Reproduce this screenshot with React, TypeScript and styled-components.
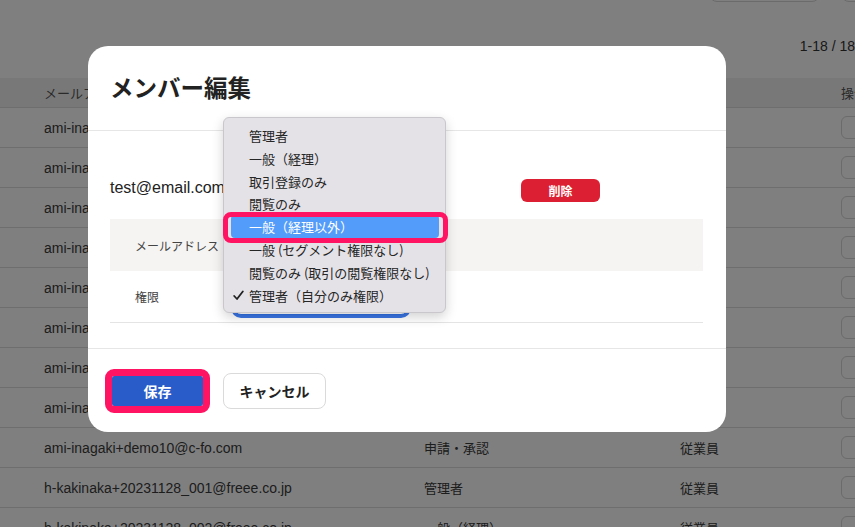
import React from "react";
import styled, { createGlobalStyle } from "styled-components";

const GlobalStyle = createGlobalStyle`
  html, body { margin: 0; padding: 0; }
  body {
    font-family: "Liberation Sans", "Noto Sans CJK JP", sans-serif;
    background: #fff;
  }
  * { box-sizing: border-box; }
`;

const Viewport = styled.div`
  position: relative;
  width: 855px;
  height: 527px;
  overflow: hidden;
  background: #fff;
`;

const PageContent = styled.div`
  width: 900px;
`;

const Toolbar = styled.div`
  display: flex;
  justify-content: flex-end;
  gap: 21px;
  margin-top: -30px;
  height: 32px;
`;

const ToolButton = styled.div<{ $w: number }>`
  width: ${(p) => p.$w}px;
  height: 32px;
  border: 1px solid #d6d6d6;
  border-radius: 8px;
  background: #fff;
`;

const PagerRow = styled.div`
  height: 76px;
  padding-top: 34px;
  padding-right: 45px;
  display: flex;
  justify-content: flex-end;
  font-size: 14px;
  line-height: 20px;
  color: #333;
`;

const GridRow = styled.div<{ $head?: boolean }>`
  display: grid;
  grid-template-columns: 380px 256px 161px 1fr;
  align-items: center;
  padding-left: 44px;
  height: ${(p) => (p.$head ? 30 : 40)}px;
  background: ${(p) => (p.$head ? "#f1f1f1" : "#fff")};
  border-bottom: 1px solid #dcdcdc;
  font-size: ${(p) => (p.$head ? 13 : 14)}px;
  color: ${(p) => (p.$head ? "#555" : "#3a3a3a")};
`;

const Cell = styled.div`
  white-space: nowrap;
  overflow: hidden;
`;

const CjkCell = styled(Cell)`
  font-size: 13px;
`;

const RowButton = styled.div`
  width: 52px;
  height: 23px;
  border: 1px solid #d6d6d6;
  border-radius: 6px;
  background: #fff;
`;

const Overlay = styled.div`
  position: absolute;
  inset: 0;
  background: rgba(0, 0, 0, 0.5);
`;

const Modal = styled.div`
  position: absolute;
  left: 88px;
  top: 46px;
  width: 638px;
  height: 386px;
  background: #fff;
  border-radius: 20px;
  display: flex;
  flex-direction: column;
`;

const ModalHeader = styled.div`
  height: 85px;
  border-bottom: 1px solid #e6e6e6;
  padding-left: 22px;
  display: flex;
  align-items: center;
`;

const Title = styled.h1`
  margin: 0;
  margin-top: -2px;
  font-family: "Noto Sans CJK JP", sans-serif;
  font-size: 23.5px;
  font-weight: 700;
  color: #222;
`;

const ModalBody = styled.div`
  position: relative;
  height: 217px;
  padding: 45px 23px 25px 22px;
`;

const EmailRow = styled.div`
  display: flex;
  align-items: flex-start;
  height: 24px;
`;

const EmailText = styled.div`
  width: 411px;
  font-size: 16px;
  line-height: 24px;
  color: #222;
`;

const DeleteButton = styled.button`
  margin-top: 3px;
  width: 79px;
  height: 23px;
  border: none;
  border-radius: 6px;
  background: #dc1f32;
  color: #fff;
  font-family: "Noto Sans CJK JP", sans-serif;
  font-size: 12px;
  font-weight: 700;
  padding: 0;
`;

const FormTable = styled.div`
  margin-top: 19px;
  display: flex;
  flex-direction: column;
`;

const FormRow = styled.div<{ $shaded?: boolean; $last?: boolean }>`
  display: flex;
  align-items: center;
  height: 52px;
  background: ${(p) => (p.$shaded ? "#f5f4f2" : "#fff")};
  border-bottom: ${(p) => (p.$last ? "1px solid #e4e4e4" : "none")};
`;

const FormLabel = styled.div`
  width: 124px;
  padding-left: 25px;
  font-size: 12px;
  color: #444;
  white-space: nowrap;
`;

const SelectBox = styled.div`
  width: 174px;
  height: 34px;
  margin-top: 2px;
  border: 1px solid #2f6fe0;
  border-radius: 7px;
  box-shadow: 0 0 0 3px #3a74e4;
  background: #fff;
`;

const Menu = styled.div`
  position: absolute;
  left: 135px;
  top: -14px;
  width: 223px;
  height: 196px;
  padding: 6px 0;
  background: #e4e2e6;
  border: 1px solid #c9c7cb;
  border-radius: 6px;
  box-shadow: 0 4px 12px rgba(0, 0, 0, 0.18);
  font-family: "Noto Sans CJK JP", sans-serif;
`;

const MenuItem = styled.div<{ $active?: boolean }>`
  position: relative;
  height: 22.85px;
  margin: 0 6px 0 7px;
  padding-left: 18px;
  border-radius: 4px;
  display: flex;
  align-items: center;
  font-size: 13px;
  color: ${(p) => (p.$active ? "#fff" : "#262626")};
  background: ${(p) => (p.$active ? "#539cf9" : "transparent")};
`;

const Check = styled.svg`
  position: absolute;
  left: 2px;
  top: 6px;
`;

const Highlight = styled.div`
  position: absolute;
  left: 135px;
  top: 81px;
  width: 225px;
  height: 31px;
  border: 5px solid #ff1463;
  border-radius: 8px;
`;

const ModalFooter = styled.div`
  flex: 1;
  border-top: 1px solid #e6e6e6;
  display: flex;
  align-items: center;
  gap: 20px;
  padding-left: 24px;
`;

const SaveButton = styled.button`
  width: 91px;
  height: 30px;
  border: none;
  border-radius: 2px;
  background: #2a5cc9;
  color: #fff;
  font-family: "Noto Sans CJK JP", sans-serif;
  font-size: 14px;
  font-weight: 700;
  outline: 7px solid #ff1463;
  padding: 0;
`;

const CancelButton = styled.button`
  width: 103px;
  height: 36px;
  border: 1px solid #dadada;
  border-radius: 8px;
  background: #fff;
  color: #222;
  font-family: "Noto Sans CJK JP", sans-serif;
  font-size: 14px;
  font-weight: 700;
  padding: 0;
`;

const rows: [string, string, string][] = [
  ["ami-inagaki+demo1@c-fo.com", "管理者", "従業員"],
  ["ami-inagaki+demo2@c-fo.com", "一般（経理）", "従業員"],
  ["ami-inagaki+demo3@c-fo.com", "取引登録のみ", "従業員"],
  ["ami-inagaki+demo4@c-fo.com", "閲覧のみ", "従業員"],
  ["ami-inagaki+demo5@c-fo.com", "一般（経理以外）", "従業員"],
  ["ami-inagaki+demo6@c-fo.com", "申請・承認", "従業員"],
  ["ami-inagaki+demo7@c-fo.com", "管理者", "従業員"],
  ["ami-inagaki+demo8@c-fo.com", "申請・承認", "従業員"],
  ["ami-inagaki+demo10@c-fo.com", "申請・承認", "従業員"],
  ["h-kakinaka+20231128_001@freee.co.jp", "管理者", "従業員"],
  ["h-kakinaka+20231128_002@freee.co.jp", "一般（経理）", "従業員"],
];

const menuItems = [
  "管理者",
  "一般（経理）",
  "取引登録のみ",
  "閲覧のみ",
  "一般（経理以外）",
  "一般 (セグメント権限なし)",
  "閲覧のみ (取引の閲覧権限なし)",
  "管理者（自分のみ権限）",
];

export default function App() {
  return (
    <>
      <GlobalStyle />
      <Viewport>
        <PageContent>
          <Toolbar>
            <ToolButton $w={111} />
            <ToolButton $w={59} />
          </Toolbar>
          <PagerRow>1-18 / 18</PagerRow>
          <GridRow $head>
            <Cell>メールアドレス</Cell>
            <Cell>権限</Cell>
            <Cell>役割</Cell>
            <Cell>操作</Cell>
          </GridRow>
          {rows.map(([email, perm, role]) => (
            <GridRow key={email}>
              <Cell>{email}</Cell>
              <CjkCell>{perm}</CjkCell>
              <CjkCell>{role}</CjkCell>
              <RowButton />
            </GridRow>
          ))}
        </PageContent>
        <Overlay>
          <Modal>
            <ModalHeader>
              <Title>メンバー編集</Title>
            </ModalHeader>
            <ModalBody>
              <EmailRow>
                <EmailText>test@email.com</EmailText>
                <DeleteButton>削除</DeleteButton>
              </EmailRow>
              <FormTable>
                <FormRow $shaded>
                  <FormLabel>メールアドレス</FormLabel>
                </FormRow>
                <FormRow $last>
                  <FormLabel>権限</FormLabel>
                  <SelectBox />
                </FormRow>
              </FormTable>
              <Menu>
                {menuItems.map((m, i) => (
                  <MenuItem key={m} $active={i === 4}>
                    {i === 7 && (
                      <Check width="11" height="11" viewBox="0 0 11 11">
                        <path
                          d="M1.2 6 L4 9 L9.8 1.5"
                          fill="none"
                          stroke="#222"
                          strokeWidth="1.8"
                          strokeLinecap="round"
                          strokeLinejoin="round"
                        />
                      </Check>
                    )}
                    {m}
                  </MenuItem>
                ))}
              </Menu>
              <Highlight />
            </ModalBody>
            <ModalFooter>
              <SaveButton>保存</SaveButton>
              <CancelButton>キャンセル</CancelButton>
            </ModalFooter>
          </Modal>
        </Overlay>
      </Viewport>
    </>
  );
}
